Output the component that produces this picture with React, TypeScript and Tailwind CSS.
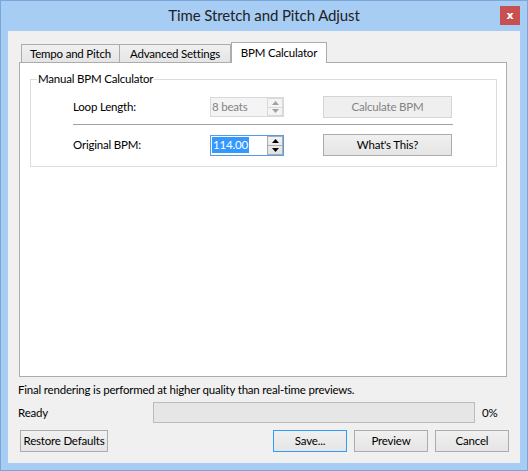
import React from "react";

const font = { fontFamily: "Lato, 'Noto Sans', sans-serif" };
const T = "text-[11.5px] tracking-[-0.2px] whitespace-nowrap";

function Arrow({ dir, color }: { dir: "up" | "down"; color: string }) {
  return (
    <svg width="7" height="4" viewBox="0 0 7 4" className="block">
      {dir === "up" ? (
        <polygon points="3.5,0 7,4 0,4" fill={color} />
      ) : (
        <polygon points="0,0 7,0 3.5,4" fill={color} />
      )}
    </svg>
  );
}

function Spin({ enabled }: { enabled: boolean }) {
  const border = enabled ? "border-[#acacac]" : "border-[#d9d9d9]";
  const arrow = enabled ? "#000000" : "#a0a0a0";
  return (
    <div className={`w-[16px] h-full border ${border} flex flex-col ${enabled ? "bg-gradient-to-b from-[#f2f2f2] to-[#e2e2e2]" : "bg-[#f4f4f4]"}`}>
      <div className={`flex-1 flex items-center justify-center border-b ${border}`}>
        <Arrow dir="up" color={arrow} />
      </div>
      <div className="flex-1 flex items-center justify-center">
        <Arrow dir="down" color={arrow} />
      </div>
    </div>
  );
}

function Btn({ children, w, primary, disabled }: { children: React.ReactNode; w: string; primary?: boolean; disabled?: boolean }) {
  let cls = "border-[#acacac] bg-gradient-to-b from-[#f0f0f0] to-[#e5e5e5] text-black";
  if (primary) cls = "border-[#3399ff] bg-gradient-to-b from-[#f0f0f0] to-[#e5e5e5] text-black";
  if (disabled) cls = "border-[#d5d5d5] bg-[#efefef] text-[#838383]";
  return (
    <div className={`${w} h-[22px] border ${cls} flex items-center justify-center ${T} leading-none`}>
      {children}
    </div>
  );
}

export default function App() {
  return (
    <div className="w-[528px] h-[471px] bg-[#a7cdf5] border border-[#7aa7da] flex flex-col text-black" style={font}>
      <div className="h-[30px] relative flex items-center justify-center">
        <span className="text-[15px] tracking-[-0.1px] text-[#222222] leading-none -mt-[1px] whitespace-nowrap">Time Stretch and Pitch Adjust</span>
        <div className="absolute right-[7px] top-[5px] w-[20px] h-[19px] bg-[#c75050] flex items-center justify-center">
          <span className="text-white text-[11px] font-bold leading-none" style={{ fontFamily: "'DejaVu Sans', sans-serif" }}>x</span>
        </div>
      </div>
      <div className="mx-[7px] h-[432px] bg-[#f0f0f0] flex flex-col pt-[11px]">
        {/* tabs */}
        <div className="flex items-end h-[21px] ml-[13px] -mb-[1px] relative z-10">
          <div className={`w-[99px] h-[18px] mb-[1px] border-t border-l border-r border-[#acacac] bg-gradient-to-b from-[#f0f0f0] to-[#e5e5e5] flex items-center justify-center ${T}`}>
            Tempo and Pitch
          </div>
          <div className={`w-[111px] h-[18px] mb-[1px] border-t border-r border-[#acacac] bg-gradient-to-b from-[#f0f0f0] to-[#e5e5e5] flex items-center justify-center ${T}`}>
            Advanced Settings
          </div>
          <div className={`w-[96px] h-[21px] border-t border-l border-r border-[#acacac] bg-white flex items-center justify-center ${T} pb-[1px]`}>
            BPM Calculator
          </div>
        </div>
        {/* panel */}
        <div className="ml-[11px] w-[488px] h-[315px] border border-[#acacac] bg-white flex flex-col">
          <div className="relative ml-[10px] mt-[16px] w-[467px] h-[88px] border border-[#dcdcdc] flex flex-col">
            <span className={`absolute left-[6px] -top-[9px] bg-white px-[1px] ${T} leading-[16px]`}>Manual BPM Calculator</span>
            <div className="flex items-center h-[22px] mt-[16px] pl-[42px]">
              <div className={`w-[137px] ${T}`}>Loop Length:</div>
              <div className="w-[74px] h-[20px] border border-[#d9d9d9] bg-[#f4f4f4] flex">
                <div className={`flex-1 flex items-center pl-[1px] ${T} text-[#838383]`}>8 beats</div>
                <Spin enabled={false} />
              </div>
              <div className="ml-[39px]">
                <Btn w="w-[129px]" disabled>Calculate BPM</Btn>
              </div>
            </div>
            <div className="ml-[42px] mt-[6px] w-[380px] h-[1px] bg-[#a0a0a0]" />
            <div className="flex items-center h-[22px] mt-[9px] pl-[42px]">
              <div className={`w-[137px] ${T}`}>Original BPM:</div>
              <div className="w-[74px] h-[21px] border border-[#569de5] bg-white flex">
                <div className={`flex-1 flex items-center pl-[1px] ${T}`}>
                  <span className="bg-[#3399ff] text-white leading-[16px] px-[1px]">114.00</span>
                </div>
                <Spin enabled />
              </div>
              <div className="ml-[39px]">
                <Btn w="w-[129px]">What's This?</Btn>
              </div>
            </div>
          </div>
        </div>
        {/* footer */}
        <div className={`ml-[10px] mt-[5px] ${T} leading-[16px]`}>
          Final rendering is performed at higher quality than real-time previews.
        </div>
        <div className="flex items-center mt-[4px] h-[21px] ml-[10px]">
          <div className={`w-[135px] ${T}`}>Ready</div>
          <div className="w-[322px] h-[21px] border border-[#bcbcbc] bg-[#e6e6e6]" />
          <div className={`ml-[7px] ${T}`}>0%</div>
        </div>
        <div className="flex items-center mt-[7px] ml-[12px]">
          <Btn w="w-[88px]">Restore Defaults</Btn>
          <div className="flex-1" />
          <div className="flex gap-[7px] mr-[11px]">
            <Btn w="w-[74px]" primary>Save...</Btn>
            <Btn w="w-[74px]">Preview</Btn>
            <Btn w="w-[74px]">Cancel</Btn>
          </div>
        </div>
      </div>
    </div>
  );
}
